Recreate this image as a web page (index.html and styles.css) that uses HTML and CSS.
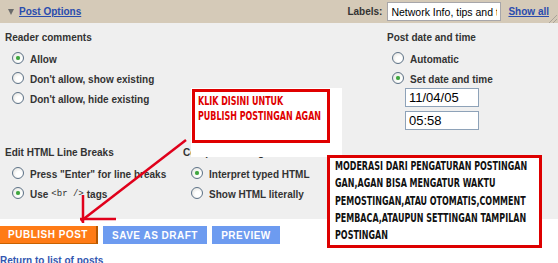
FILE: index.html
```html
<!DOCTYPE html>
<html lang="en">
<head>
    <meta charset="UTF-8">
    <title>Post Options</title>
    <link rel="stylesheet" href="styles.css">
</head>
<body>
    <div class="page">
        <div class="options-bar">
            <a class="toggle" href="#"><span class="tri"></span><span class="toggle-text">Post Options</span></a>
            <div class="labels">
                <span class="labels-title">Labels:</span>
                <input class="labels-input" type="text" value="Network Info, tips and tricks">
                <a class="show-all" href="#">Show all</a>
            </div>
            <svg class="grip" width="9" height="9" viewBox="0 0 9 9">
                <line x1="1" y1="9" x2="9" y2="1" stroke="#a9a39a" stroke-width="1"/>
                <line x1="5" y1="9" x2="9" y2="5" stroke="#a9a39a" stroke-width="1"/>
            </svg>
        </div>

        <div class="options-body">
            <div class="opt-row first">
                <div class="opt-col reader">
                    <div class="section-label">Reader comments</div>
                    <label class="radio-item"><span class="radio checked"></span>Allow</label>
                    <label class="radio-item"><span class="radio"></span>Don't allow, show existing</label>
                    <label class="radio-item"><span class="radio"></span>Don't allow, hide existing</label>
                </div>
                <div class="opt-col date">
                    <div class="section-label">Post date and time</div>
                    <label class="radio-item"><span class="radio"></span>Automatic</label>
                    <label class="radio-item"><span class="radio checked"></span>Set date and time</label>
                    <input class="date-input" type="text" value="11/04/05">
                    <input class="date-input" type="text" value="05:58">
                </div>
            </div>
            <div class="opt-row second">
                <div class="opt-col breaks">
                    <div class="section-label">Edit HTML Line Breaks</div>
                    <label class="radio-item"><span class="radio"></span>Press "Enter" for line breaks</label>
                    <label class="radio-item"><span class="radio checked"></span>Use <code>&lt;br /&gt;</code> tags</label>
                </div>
                <div class="opt-col compose">
                    <div class="section-label">Compose settings</div>
                    <label class="radio-item"><span class="radio checked"></span>Interpret typed HTML</label>
                    <label class="radio-item"><span class="radio"></span>Show HTML literally</label>
                </div>
            </div>
        </div>

        <div class="actions">
            <button class="btn publish">PUBLISH POST</button>
            <button class="btn draft">SAVE AS DRAFT</button>
            <button class="btn preview">PREVIEW</button>
        </div>
        <a class="return-link" href="#">Return to list of posts</a>

        <!-- annotations pasted over the screenshot -->
        <div class="note note-publish">
            <div class="note-frame"><span class="note-text">KLIK DISINI UNTUK<br>PUBLISH POSTINGAN AGAN</span></div>
        </div>
        <div class="note note-options">
            <span class="note-text">MODERASI DARI PENGATURAN POSTINGAN<br>
            GAN,AGAN BISA MENGATUR WAKTU<br>
            PEMOSTINGAN,ATAU OTOMATIS,COMMENT<br>
            PEMBACA,ATAUPUN SETTINGAN TAMPILAN<br>
            POSTINGAN</span>
        </div>
        <svg class="arrow" width="558" height="263" viewBox="0 0 558 263">
            <line x1="186" y1="140" x2="81" y2="221" stroke="#e0001b" stroke-width="2.5"/>
            <line x1="83" y1="195" x2="83" y2="223" stroke="#e0001b" stroke-width="2.5"/>
            <line x1="80" y1="219" x2="116" y2="219" stroke="#e0001b" stroke-width="2.5"/>
        </svg>
    </div>
</body>
</html>
```

FILE: styles.css
```css
body {
    margin: 0;
    background: #fff;
    font-family: "Liberation Sans", Arial, sans-serif;
    font-size: 10px;
    color: #333;
}
.page {
    position: relative;
    width: 558px;
    height: 263px;
    overflow: hidden;
}
.options-bar {
    height: 23px;
    background: #d5cab8;
    display: flex;
    align-items: center;
    padding-left: 8px;
    position: relative;
}
.toggle {
    display: flex;
    align-items: center;
    text-decoration: none;
}
.tri {
    width: 0;
    height: 0;
    border-left: 3.5px solid transparent;
    border-right: 3.5px solid transparent;
    border-top: 6px solid #6b6b6b;
    margin-right: 5px;
}
.toggle-text {
    font-weight: bold;
    color: #2a4cae;
    text-decoration: underline;
}
.labels {
    margin-left: auto;
    margin-right: 9px;
    display: flex;
    align-items: center;
}
.labels-title {
    font-weight: bold;
    color: #333;
    margin-right: 5px;
}
.labels-input {
    box-sizing: border-box;
    width: 114px;
    height: 19px;
    margin: 0 7px 0 0;
    padding: 0 3px;
    border: 1px solid #a7a6aa;
    background: #fff;
    font-family: "Liberation Sans", Arial, sans-serif;
    font-size: 10.5px;
    color: #000;
}
.show-all {
    font-weight: bold;
    color: #2a4cae;
}
.grip {
    position: absolute;
    right: 1px;
    bottom: 0;
}
.options-body {
    height: 196px;
    box-sizing: border-box;
    background: #efefef;
    padding-top: 9px;
}
.opt-row {
    display: flex;
}
.opt-row.second {
    margin-top: 12px;
}
.opt-col {
    display: flex;
    flex-direction: column;
    align-items: flex-start;
}
.reader {
    width: 382px;
    padding-left: 5px;
}
.breaks {
    width: 178px;
    padding-left: 5px;
}
.section-label {
    font-weight: bold;
    line-height: 12px;
    margin-bottom: 5px;
    color: #333;
    white-space: nowrap;
}
.radio-item {
    height: 20px;
    display: flex;
    align-items: center;
    padding-left: 7px;
    font-weight: bold;
    color: #333;
    white-space: nowrap;
}
.date .radio-item {
    padding-left: 5px;
}
.compose .radio-item {
    padding-left: 8px;
}
.radio-item code {
    font-family: "Liberation Mono", monospace;
    font-size: 9px;
    font-weight: normal;
    margin: 0 3px;
}
.radio {
    box-sizing: border-box;
    width: 12px;
    height: 12px;
    border: 1px solid #5d7287;
    border-radius: 50%;
    background: radial-gradient(circle at 60% 60%, #ffffff 30%, #dcdcd6 100%);
    margin-right: 6px;
    margin-top: -3px;
    position: relative;
}
.radio.checked::after {
    content: "";
    position: absolute;
    left: 3px;
    top: 3px;
    width: 4px;
    height: 4px;
    border-radius: 50%;
    background: #3fa53f;
    box-shadow: 0 0 1px #7fd07f;
}
.date-input {
    box-sizing: border-box;
    width: 74px;
    height: 19px;
    margin: -1px 0 5px 18px;
    padding: 0 3px;
    border: 1px solid #8ea2b8;
    background: #fff;
    font-family: "Liberation Sans", Arial, sans-serif;
    font-size: 13px;
    color: #000;
}
.actions {
    display: flex;
    gap: 5px;
    margin-top: 7px;
}
.btn {
    height: 18px;
    border: none;
    margin: 0;
    padding: 0;
    font-family: "Liberation Sans", Arial, sans-serif;
    font-size: 10px;
    font-weight: bold;
    letter-spacing: 0.5px;
    white-space: nowrap;
    color: #fff;
    cursor: pointer;
}
.publish {
    width: 98px;
    background: #ff7b16;
    border-right: 2px solid #b45700;
    border-bottom: 1px solid #c86200;
}
.draft {
    width: 104px;
    background: #6d9bf0;
}
.preview {
    width: 68px;
    background: #6d9bf0;
}
.return-link {
    display: block;
    margin-top: 11px;
    font-weight: bold;
    line-height: 12px;
    color: #3356b0;
}
.note {
    position: absolute;
    background: #fff;
    font-family: "DejaVu Sans Condensed", "DejaVu Sans", sans-serif;
    font-weight: bold;
    white-space: nowrap;
}
.note-text {
    display: inline-block;
    transform: scaleX(0.74);
    transform-origin: left top;
}
.note-publish {
    left: 191px;
    top: 88px;
    width: 151px;
    height: 69px;
}
.note-frame {
    box-sizing: border-box;
    width: 138px;
    height: 54px;
    margin: 1px 0 0 1px;
    border: 3px solid #e00000;
    padding: 2px 0 0 3px;
    font-size: 12px;
    line-height: 15px;
    color: #e00000;
}
.note-options {
    box-sizing: border-box;
    left: 327px;
    top: 155px;
    width: 215px;
    height: 93px;
    border: 3px solid #dd0000;
    padding: 0 0 0 5px;
    font-size: 12px;
    line-height: 17.3px;
    color: #111;
}
.arrow {
    position: absolute;
    left: 0;
    top: 0;
    pointer-events: none;
}
```
